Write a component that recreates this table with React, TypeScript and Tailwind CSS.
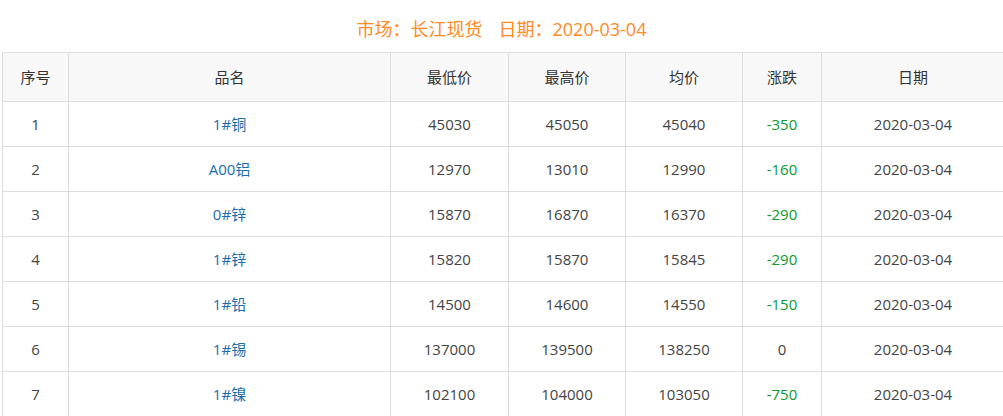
import React from "react";

const rows = [
  ["1", "1#铜", "45030", "45050", "45040", "-350"],
  ["2", "A00铝", "12970", "13010", "12990", "-160"],
  ["3", "0#锌", "15870", "16870", "16370", "-290"],
  ["4", "1#锌", "15820", "15870", "15845", "-290"],
  ["5", "1#铅", "14500", "14600", "14550", "-150"],
  ["6", "1#锡", "137000", "139500", "138250", "0"],
  ["7", "1#镍", "102100", "104000", "103050", "-750"],
];

const widths = [66, 322, 118, 117, 117, 79, 183];

export default function App() {
  return (
    <div
      className="w-[1003px] h-[416px] overflow-hidden bg-white text-[15px] text-[#333]"
      style={{ fontFamily: '"Open Sans", "Noto Sans CJK SC", sans-serif' }}
    >
      <div className="h-[52px] flex items-center justify-center pt-[6px] text-[18px] text-[#ff8a1f]">
        <span>市场：长江现货</span>
        <span className="ml-[16px]">日期：2020-03-04</span>
      </div>
      <div className="pl-[2px]">
        <table className="table-fixed border-collapse w-[1002px]">
          <colgroup>
            {widths.map((w, i) => (
              <col key={i} style={{ width: w }} />
            ))}
          </colgroup>
          <thead>
            <tr className="h-[49px] bg-[#f8f8f8]">
              {["序号", "品名", "最低价", "最高价", "均价", "涨跌", "日期"].map((h) => (
                <th key={h} className="border border-[#ddd] font-normal text-center text-[#333] p-0">
                  {h}
                </th>
              ))}
            </tr>
          </thead>
          <tbody>
            {rows.map((r) => (
              <tr key={r[0]} className="h-[45px]">
                <td className="border border-[#ddd] text-center p-0 text-[#444]">{r[0]}</td>
                <td className="border border-[#ddd] text-center p-0 text-[#1a6cac]">{r[1]}</td>
                <td className="border border-[#ddd] text-center p-0 text-[#444]">{r[2]}</td>
                <td className="border border-[#ddd] text-center p-0 text-[#444]">{r[3]}</td>
                <td className="border border-[#ddd] text-center p-0 text-[#444]">{r[4]}</td>
                <td
                  className={
                    r[5].startsWith("-")
                      ? "border border-[#ddd] text-center p-0 text-[#0a9b2a]"
                      : "border border-[#ddd] text-center p-0 text-[#444]"
                  }
                >
                  {r[5]}
                </td>
                <td className="border border-[#ddd] text-center p-0 text-[#444]">2020-03-04</td>
              </tr>
            ))}
          </tbody>
        </table>
      </div>
    </div>
  );
}
